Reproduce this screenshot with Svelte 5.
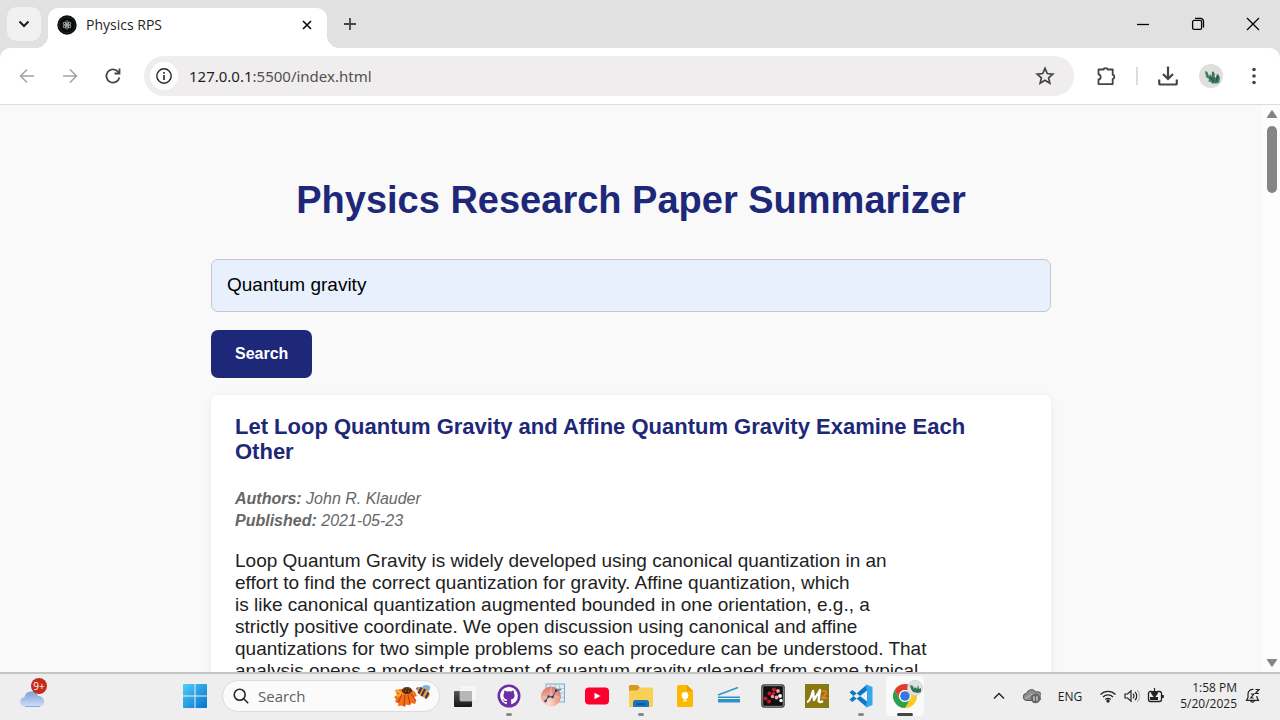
<script>
  let query = $state('Quantum gravity');

  const paper = {
    title: 'Let Loop Quantum Gravity and Affine Quantum Gravity Examine Each Other',
    authors: 'John R. Klauder',
    published: '2021-05-23',
    lines: [
      'Loop Quantum Gravity is widely developed using canonical quantization in an',
      'effort to find the correct quantization for gravity. Affine quantization, which',
      'is like canonical quantization augmented bounded in one orientation, e.g., a',
      'strictly positive coordinate. We open discussion using canonical and affine',
      'quantizations for two simple problems so each procedure can be understood. That',
      'analysis opens a modest treatment of quantum gravity gleaned from some typical'
    ]
  };
</script>

<div class="window">
  <header class="tabstrip">
    <button class="tab-search" aria-label="Search tabs">
      <svg width="12" height="12" viewBox="0 0 12 12"><path d="M1.500 3.500l4.500 4.500 4.500-4.500" fill="none" stroke="#1f1f1f" stroke-width="2" /></svg>
    </button>
    <div class="tab">
      <svg width="20" height="20" viewBox="0 0 20 20">
        <circle cx="10" cy="10" r="9.7" fill="#090b0a" />
        <circle cx="10" cy="10" r="8" fill="none" stroke="#2c3a33" stroke-width=".6" />
        <g fill="none" stroke="#b8bcba" stroke-width=".7">
          <ellipse cx="10" cy="10" rx="1.7" ry="4.4" />
          <ellipse cx="10" cy="10" rx="1.7" ry="4.4" transform="rotate(60 10 10)" />
          <ellipse cx="10" cy="10" rx="1.7" ry="4.4" transform="rotate(120 10 10)" />
        </g>
        <circle cx="10" cy="10" r="1" fill="#ddd" />
      </svg>
      <span class="tab-title">Physics RPS</span>
      <button class="tab-close" aria-label="Close tab">
        <svg width="12" height="12" viewBox="0 0 12 12"><path d="M2 2l8 8M10 2l-8 8" stroke="#111" stroke-width="1.700" /></svg>
      </button>
    </div>
    <button class="new-tab" aria-label="New tab">
      <svg width="14" height="14" viewBox="0 0 14 14"><path d="M7 1v12M1 7h12" stroke="#444" stroke-width="1.8" /></svg>
    </button>
    <div class="controls">
      <button aria-label="Minimize"><svg width="14" height="14" viewBox="0 0 14 14"><path d="M1 7.5h12" stroke="#000" stroke-width="1.3" /></svg></button>
      <button aria-label="Restore">
        <svg width="14" height="14" viewBox="0 0 14 14" fill="none" stroke="#000" stroke-width="1.3"><rect x="1.6" y="3.4" width="9" height="9" rx="1.5" /><path d="M4 1.4h5.5a3 3 0 013 3v6" /></svg>
      </button>
      <button aria-label="Close"><svg width="14" height="14" viewBox="0 0 14 14"><path d="M1 1l12 12M13 1L1 13" stroke="#000" stroke-width="1.3" /></svg></button>
    </div>
  </header>

  <nav class="toolbar" aria-label="Browser">
    <button class="tool" aria-label="Back"><svg width="16" height="16" viewBox="0 0 16 16"><path d="M15 8H2M8 1.5L1.5 8 8 14.500" fill="none" stroke="#a3a3a3" stroke-width="1.6" /></svg></button>
    <button class="tool" aria-label="Forward"><svg width="16" height="16" viewBox="0 0 16 16"><path d="M1 8h13M8 1.500L14.500 8 8 14.500" fill="none" stroke="#a3a3a3" stroke-width="1.6" /></svg></button>
    <button class="tool" aria-label="Reload">
      <svg width="18" height="18" viewBox="0 0 18 18"><path d="M15.400 10.500A6.600 6.600 0 1 1 14 4.700l1.200 1.500" fill="none" stroke="#444" stroke-width="1.8" /><path d="M15.500 1.500V6.500H10.500" fill="none" stroke="#444" stroke-width="1.800" /></svg>
    </button>
    <div class="omnibox">
      <button class="site-info" aria-label="Site information">
        <svg width="18" height="18" viewBox="0 0 18 18"><circle cx="9" cy="9" r="7.200" fill="none" stroke="#262626" stroke-width="1.400" /><path d="M9 8v5M9 5v1.800" stroke="#262626" stroke-width="1.600" /></svg>
      </button>
      <a class="url" href="#results">127.0.0.1<span>:5500/index.html</span></a>
      <button class="star" aria-label="Bookmark this page">
        <svg width="20" height="20" viewBox="0 0 20 20"><path d="M10 2.400l2.250 5.100 5.550.55-4.200 3.700 1.250 5.450L10 14.300l-4.850 2.900 1.250-5.450-4.200-3.700 5.550-.55z" fill="none" stroke="#444" stroke-width="1.700" /></svg>
      </button>
    </div>
    <button class="tool extensions" aria-label="Extensions">
      <svg width="22" height="22" viewBox="0 0 22 22"><path d="M3.500 4.500h5.200a1.900 1.400 0 013.800 0h5.200v5.300a1.600 2 0 010 4v5.300H3.500v-4.600c2.900-.3 2.900-4.900 0-5.200z" fill="none" stroke="#444" stroke-width="1.800" stroke-linejoin="round" /></svg>
    </button>
    <span class="divider"></span>
    <button class="tool" aria-label="Downloads">
      <svg width="22" height="22" viewBox="0 0 22 22" fill="none" stroke="#444" stroke-width="2.200"><path d="M11 1.500v12.500M6 9l5 5 5-5M2.200 14.500v3.400c0 1 .6 1.600 1.600 1.600h14.400c1 0 1.600-.6 1.600-1.600v-3.400" /></svg>
    </button>
    <button class="tool" aria-label="Profile">
      <svg width="24" height="24" viewBox="0 0 24 24"><circle cx="12" cy="12" r="12" fill="#dedfde" /><path d="M6 7l2.500 1 1.500 4.500 1-2.500 1.500 2.500L13 7.500l2 .5-.5 5 2 1 1.500-4 1.500.5 1.500 3.500-.8 4.500-2.200 1H13l-1.500-2-2 .5.500-3-3-2-.5-3z" fill="#3f7d61" /><path d="M11 13l4 5M15 9v6M19 12l-2 5" stroke="#16452f" fill="none" /></svg>
    </button>
    <button class="tool" aria-label="Browser menu">
      <svg width="6" height="18" viewBox="0 0 6 18" fill="#444"><circle cx="3" cy="2.500" r="1.800" /><circle cx="3" cy="9" r="1.800" /><circle cx="3" cy="15.500" r="1.800" /></svg>
    </button>
  </nav>

  <div class="viewport">
    <main>
      <h1>Physics Research Paper Summarizer</h1>
      <form onsubmit={(e) => e.preventDefault()}>
        <input type="text" aria-label="Research topic" bind:value={query} />
        <button type="submit">Search</button>
      </form>
      <article id="results">
        <h2>{paper.title}</h2>
        <p class="meta"><strong>Authors:</strong> {paper.authors}<br /><strong>Published:</strong> {paper.published}</p>
        <p class="abstract">{paper.lines.join('\n')}</p>
      </article>
    </main>
    <div class="scrollbar" aria-hidden="true">
      <svg width="12" height="10" viewBox="0 0 12 10"><path d="M6 1.500L10.800 8.500H1.200z" fill="#858585" stroke="#858585" stroke-linejoin="round" /></svg>
      <span class="thumb"></span>
      <svg width="12" height="10" viewBox="0 0 12 10"><path d="M6 8.500L10.800 1.500H1.200z" fill="#858585" stroke="#858585" stroke-linejoin="round" /></svg>
    </div>
  </div>

  <footer class="taskbar">
    <button class="app" aria-label="Weather">
      <svg width="28" height="28" viewBox="0 0 28 28">
        <defs><linearGradient id="cloud" x1="0" y1="0" x2="0" y2="1"><stop offset="0" stop-color="#7f9fd8" /><stop offset="1" stop-color="#cfe0fa" /></linearGradient></defs>
        <path d="M6 25a5 5 0 01-.6-9.900A7.300 7.300 0 0119.200 14 5.600 5.600 0 0121 25z" fill="url(#cloud)" />
        <path d="M6 24.500h15" stroke="#88a9dd" />
      </svg>
      <span class="count">9+</span>
    </button>

    <button class="app start" aria-label="Start">
      <svg width="24" height="24" viewBox="0 0 24 24">
        <defs><linearGradient id="win" x1="0" y1="0" x2="1" y2="1"><stop offset="0" stop-color="#4fcdf8" /><stop offset="1" stop-color="#0672cd" /></linearGradient></defs>
        <path d="M0 1a1 1 0 011-1h10.500v11.500H0zM12.500 0H23a1 1 0 011 1v10.500H12.500zM0 12.500h11.500V24H1a1 1 0 01-1-1zM12.500 12.500H24V23a1 1 0 01-1 1H12.500z" fill="url(#win)" />
      </svg>
    </button>

    <label class="search">
      <svg width="16" height="16" viewBox="0 0 16 16" fill="none" stroke="#262626" stroke-width="1.600"><circle cx="6.700" cy="6.700" r="5.500" /><path d="M10.800 10.800l4.400 4.400" /></svg>
      <input type="text" placeholder="Search" aria-label="Search Windows" />
      <svg width="38" height="24" viewBox="0 0 38 24">
        <path d="M2 6l7-1h9l4 3 2 4-3 1 2 5-1 2-4-1-1 2.500-4-1L12 23l-3-1.500L5 22l.5-3-3.500-1 1-3-2-2 3-2z" fill="#f0711a" />
        <path d="M2.500 6.200l6 3M4 12l6-2" stroke="#ffb02e" stroke-width="2" />
        <path d="M9 10l-4 9M12 11l-1 11M15 11l2 9M18 10l5 7" stroke="#c53e10" stroke-width="1.200" fill="none" />
        <ellipse cx="14" cy="6.500" rx="5" ry="3.500" fill="#54290d" />
        <path d="M10 5h1M13 4h1M16 5h1M12 7h1M15 7.500h1" stroke="#c1822b" stroke-width="1.200" />
        <path d="M29 4c0-3 4-4 8-2 1 3-1 6-5 6z" fill="#79b7e2" />
        <path d="M23 5c0-2 3-2.500 6 0l-3 3z" fill="#777387" />
        <ellipse cx="30.500" cy="8.500" rx="6.800" ry="4.300" transform="rotate(35 30.500 8.500)" fill="#e0a03b" />
        <path d="M28.500 3.500l-3 6M32 5l-3.500 7M35.500 8.500l-3 6" stroke="#493252" stroke-width="2.200" />
      </svg>
    </label>

    <div class="apps">
      <button class="app" aria-label="Task view">
        <svg width="26" height="24" viewBox="0 0 26 24">
          <defs><linearGradient id="tv" x1="0" y1="0" x2="0" y2="1"><stop offset="0" stop-color="#555" /><stop offset="1" stop-color="#151515" /></linearGradient></defs>
          <rect x="2" y="7" width="18" height="16" rx="1" fill="url(#tv)" /><rect x="8" y="1" width="17" height="16" rx="1" fill="#f6f6f6" stroke="#e4e4e4" stroke-width=".6" /><path d="M8 7h12v10H8z" fill="#b7b7b7" />
        </svg>
      </button>
      <button class="app running" aria-label="GitHub Desktop">
        <svg width="24" height="24" viewBox="0 0 24 24">
          <circle cx="12" cy="12" r="11.500" fill="#6c2fa4" />
          <path transform="translate(3.200 3) scale(1.100)" fill="#fff" d="M8 0C3.580 0 0 3.580 0 8c0 3.540 2.290 6.530 5.470 7.590.4.070.55-.17.55-.38 0-.19-.01-.82-.01-1.490-2.010.37-2.530-.49-2.690-.94-.09-.23-.48-.94-.82-1.130-.28-.15-.68-.52-.01-.53.63-.01 1.080.58 1.230.82.72 1.210 1.870.87 2.330.66.07-.52.28-.87.51-1.070-1.780-.2-3.640-.89-3.640-3.950 0-.87.31-1.590.82-2.150-.08-.2-.36-1.020.08-2.120 0 0 .67-.21 2.200.82a7.400 7.400 0 014 0c1.530-1.040 2.200-.82 2.200-.82.44 1.100.16 1.920.08 2.120.51.56.82 1.270.82 2.150 0 3.070-1.870 3.750-3.650 3.950.29.25.54.73.54 1.480 0 1.070-.01 1.930-.01 2.200 0 .21.15.46.55.38A8.010 8.010 0 0016 8c0-4.420-3.580-8-8-8z" />
        </svg>
      </button>
      <button class="app" aria-label="Graphing">
        <svg width="26" height="26" viewBox="0 0 26 26">
          <defs><radialGradient id="ball" cx=".4" cy=".85" r=".8"><stop offset="0" stop-color="#ffe3d4" /><stop offset=".5" stop-color="#f3a48c" /><stop offset="1" stop-color="#dc7462" /></radialGradient></defs>
          <rect x="6" y="1" width="18.500" height="18" fill="#dcecf5" stroke="#85aac6" /><path d="M6 5.500h18M6 10h18M6 14.500h18M10.500 1v18M15 1v18M19.500 1v18" stroke="#9dc0d7" stroke-width=".7" />
          <circle cx="11" cy="13.500" r="10" fill="url(#ball)" opacity=".92" /><path d="M2 14h18M11 4v19" stroke="#f8cfc1" stroke-width=".7" />
          <path d="M5.500 18l3-4.500 4 .5 3.500-6.500 5-1" fill="none" stroke="#314e76" /><path d="M5.500 18h.1M8.500 13.500h.1M12.500 14h.1M16 7.500h.1" stroke="#243f67" stroke-width="2.400" stroke-linecap="round" />
        </svg>
      </button>
      <button class="app" aria-label="YouTube">
        <svg width="24" height="24" viewBox="0 0 24 24"><rect y="3.500" width="24" height="17" rx="4" fill="#fc0030" /><path d="M9.500 8.800l6 3.200-6 3.200z" fill="#fff" /></svg>
      </button>
      <button class="app running" aria-label="File Explorer">
        <svg width="26" height="24" viewBox="0 0 26 24"><path d="M1 2.500A1.500 1.500 0 012.500 1h7L12 3.500 9 7H1z" fill="#d79a1f" /><path d="M1 6.500h8l3-3h11.500A1.500 1.500 0 0125 5v18H1z" fill="#f8d057" /><path d="M5 23v-4.500a2.500 2.500 0 012.500-2.500h11a2.500 2.500 0 012.500 2.500V23z" fill="#1875be" /><path d="M9 20h8" stroke="#0a4782" stroke-width="1.500" stroke-linecap="round" /></svg>
      </button>
      <button class="app" aria-label="Google Keep">
        <svg width="18" height="24" viewBox="0 0 18 24"><path d="M2.500 1H11l6 6v14.500a1.500 1.500 0 01-1.500 1.500h-13A1.500 1.500 0 011 21.500v-19A1.500 1.500 0 012.500 1z" fill="#fbb900" /><path d="M11 1l6 6h-6z" fill="#f29a00" /><circle cx="9" cy="11.500" r="3.400" fill="#fff" /><path d="M7.300 14h3.400v1.500H7.300zM7.300 16.300h3.400v1.200H7.300z" fill="#fff" /></svg>
      </button>
      <button class="app" aria-label="Scanner">
        <svg width="24" height="24" viewBox="0 0 24 24"><path d="M1 11L21 3.500" stroke="#3595c1" stroke-width="1.600" /><path d="M1 12.500h22v1.500H1zM1 15h22v3.500H1z" fill="#2c92c6" /></svg>
      </button>
      <button class="app" aria-label="Molecule viewer">
        <svg width="24" height="24" viewBox="0 0 24 24"><rect x=".7" y=".7" width="22.600" height="22.600" rx="2" fill="#111" stroke="#555" /><rect x="1.700" y="1.700" width="20.600" height="20.600" rx="1.500" fill="none" stroke="#ddd" stroke-width=".6" /><g fill="#c8192a"><circle cx="8.500" cy="9.500" r="2" /><circle cx="13" cy="5.500" r="2" /><circle cx="4.500" cy="14.500" r="2" /><circle cx="8" cy="17.500" r="2" /><circle cx="12.500" cy="9.500" r="1.800" /></g><g fill="#f0a0a8"><circle cx="17" cy="7" r="1.900" /><circle cx="15.500" cy="13.500" r="1.900" /><circle cx="11.500" cy="12.500" r="1.700" /></g><circle cx="19" cy="12" r="1.900" fill="#fff" /><circle cx="20" cy="16.500" r="1.700" fill="#fff" /></svg>
      </button>
      <button class="app" aria-label="M2">
        <svg width="24" height="24" viewBox="0 0 24 24"><path d="M0 0h24v24H0z" fill="#877811" /><path d="M2 18c2 0 4-4 6-11l1 9 6-10-1.500 11c1 1.500 3 1 4.500 0" fill="none" stroke="#fff" stroke-width="2.400" stroke-linejoin="round" /><path d="M17 8c1-1.500 4-1.500 4 0.500 0 1.800-2 3.500-3.500 5.500H22" fill="none" stroke="#f47a22" stroke-width="2" /></svg>
      </button>
      <button class="app running" aria-label="Visual Studio Code">
        <svg width="24" height="24" viewBox="0 0 24 24"><path d="M0.500 8.500L3.300 6 18 17.500v6zM.5 15.500l2.800 2.500L18 6.500V.5z" fill="#0b78c4" /><path d="M17.500.4L23.500 3v18l-6 2.600-1-1L18 18V6l-1.500-4.600z" fill="#35a7ee" /></svg>
      </button>
      <button class="app active" aria-label="Google Chrome">
        <svg width="24" height="24" viewBox="0 0 24 24"><path d="M12 12V6h10.400A12 12 0 0112 24z" fill="#fcc91e" /><path d="M1.600 6A12 12 0 0122.400 6H12a6 6 0 00-5.200 9z" fill="#e33b2e" /><path d="M1.600 6A12 12 0 0012 24l5.200-9a6 6 0 01-10.400 0z" fill="#2da04b" /><circle cx="12" cy="12" r="6" fill="#fff" /><circle cx="12" cy="12" r="4.800" fill="#3577e5" /></svg>
        <svg class="profile" width="16" height="16" viewBox="0 0 16 16"><circle cx="8" cy="8" r="7.600" fill="#dfe2df" stroke="#c6c8c6" stroke-width=".6" /><path d="M3 5l3 1 1 3 1-2 2 2 1-4 1 4 2-1v4l-3 1-5-1-2-3z" fill="#2f7153" /></svg>
      </button>
    </div>

    <div class="tray">
      <button class="chevron" aria-label="Show hidden icons"><svg width="12" height="12" viewBox="0 0 12 12"><path d="M1 8.500l5-5 5 5" fill="none" stroke="#222" stroke-width="1.400" /></svg></button>
      <button class="onedrive" aria-label="OneDrive paused">
        <svg width="18" height="16" viewBox="0 0 18 16"><path d="M4 12.500a3.600 3.600 0 01-.3-7.200A5 5 0 0112.800 4 4 4 0 0116 12.500z" fill="#8e8e8e" stroke="#555" /><path d="M2 11l7-5 6 5" stroke="#bbb" fill="none" /><circle cx="12.500" cy="10.500" r="4.800" fill="#666" /><path d="M11 8.300v4.400M14 8.300v4.400" stroke="#ddd" stroke-width="1.200" /></svg>
      </button>
      <button class="lang">ENG</button>
      <button class="quick" aria-label="Network, volume and battery">
        <svg width="18" height="16" viewBox="0 0 18 16" fill="none" stroke="#222" stroke-width="1.300"><path d="M1.500 6.500a10.500 10.500 0 0115 0M4 9a7 7 0 0110 0M6.300 11.500a3.800 3.800 0 015.400 0" /><circle cx="9" cy="13" r="1" fill="#222" /></svg>
        <svg width="18" height="16" viewBox="0 0 18 16" fill="none" stroke="#222" stroke-width="1.200"><path d="M2 6h2.500L8 2.800v10.400L4.500 10H2z" /><path d="M10 5.800a3 3 0 010 4.400M12 3.800a6 6 0 010 8.400" /><path d="M14.200 2a8.500 8.500 0 010 12" stroke="#b5b5b5" /></svg>
        <svg width="18" height="16" viewBox="0 0 18 16"><path d="M5 3.500H3.500A2 2 0 001.500 5.500v6a2 2 0 002 2h9a2 2 0 002-2v-6a2 2 0 00-2-2H10" fill="none" stroke="#222" stroke-width="1.300" /><path d="M3 9h8v3H3zM15 7h1.800v3H15z" fill="#222" /><path d="M7.500 0v4M4.800 3.500h5.400v2L7.500 9 4.800 5.500z" stroke="#222" fill="#222" stroke-width="1.200" /></svg>
      </button>
      <button class="clock"><span>1:58 PM</span><span>5/20/2025</span></button>
      <button class="bell" aria-label="Notifications snoozed">
        <svg width="16" height="16" viewBox="0 0 16 16" fill="none" stroke="#222" stroke-width="1.200"><path d="M8.500 1.500A4.600 4.600 0 003 6v3.500L1.500 12.400h12L12 9.500V8" /><path d="M5.600 12.800a2 2 0 003.800 0M5.800 6h3l-3 4h3M10.500 1.500h3.500l-3.500 4h3.500" /></svg>
      </button>
    </div>
  </footer>
</div>

<style>
  :global(body) { margin: 0; }
  * { box-sizing: border-box; }
  .window {
    display: flex;
    flex-direction: column;
    height: 100vh;
    overflow: hidden;
    background: #e1e1e1;
    font-family: "Open Sans", "Noto Sans", sans-serif;
    font-size: 14px;
    color: #1f1f1f;
  }
  svg { display: block; flex: none; }
  button { font: inherit; color: inherit; border: 0; padding: 0; background: none; }

  .tabstrip { display: flex; align-items: flex-end; height: 48px; flex: none; padding-left: 7px; }
  .tab-search {
    display: grid; place-items: center; width: 34px; height: 34px;
    margin: 0 7px 7px 0; border-radius: 10px; background: #f1f1f1;
  }
  .tab {
    position: relative; display: flex; align-items: center; gap: 9px;
    width: 279px; height: 40px; padding: 0 10px 7px 9px;
    border-radius: 10px 10px 0 0; background: #fff;
  }
  .tab::before, .tab::after { content: ""; position: absolute; bottom: 0; width: 12px; height: 12px; }
  .tab::before { right: 100%; background: radial-gradient(circle at 0 0, transparent 12px, #fff 12px); }
  .tab::after { left: 100%; background: radial-gradient(circle at 100% 0, transparent 12px, #fff 12px); }
  .tab-title { flex: 1; line-height: 20px; }
  .tab-close, .new-tab { display: grid; place-items: center; width: 20px; height: 20px; }
  .new-tab { margin: 0 0 14px 13px; }
  .controls { display: flex; align-self: stretch; margin-left: auto; }
  .controls button { display: grid; place-items: center; width: 55px; }

  .toolbar {
    display: flex; align-items: center; height: 57px; flex: none;
    padding: 0 5px 0 5px; border-bottom: 1px solid #dcdcdc;
    border-radius: 10px 10px 0 0; background: #fff;
  }
  .tool { display: grid; place-items: center; width: 43px; height: 40px; }
  .omnibox {
    display: flex; align-items: center; flex: 1; height: 40px;
    margin: 0 10px; padding: 0 19px 0 6px; border-radius: 20px; background: #efedee;
  }
  .site-info { display: grid; place-items: center; width: 28px; height: 28px; border-radius: 50%; background: #fff; }
  .url {
    flex: 1; margin-left: 11px; font-family: "Noto Sans", "Open Sans", sans-serif;
    font-size: 15px; line-height: 20px; color: #1f1f1f; text-decoration: none;
  }
  .url span { color: #505050; }
  .divider { width: 2px; height: 18px; margin: 0 8px 0 9px; background: #dcdcdc; }

  .viewport { display: flex; flex: 1; min-height: 0; background: #f9f9f9; }
  main {
    flex: 1; min-width: 0; overflow-y: auto; scrollbar-width: none; padding: 72px 32px 0;
    font-family: "Liberation Sans", Arial, sans-serif; color: #222;
  }
  h1, form, article { max-width: 840px; margin: 0 auto; }
  h1 { font-size: 38px; line-height: 46px; text-align: center; color: #1e2879; }
  form { display: flex; flex-direction: column; align-items: flex-start; gap: 18px; margin-top: 36px; }
  form input {
    width: 100%; height: 53px; padding: 0 15px 2px; border: 1px solid #c5c7cc; border-radius: 7px;
    background: #e8f0fe; font: 19px "Liberation Sans", Arial, sans-serif; color: #000;
  }
  form button {
    height: 48px; padding: 0 24px; border-radius: 7px; background: #1e2879;
    font-size: 16px; font-weight: bold; color: #fff;
  }
  article {
    margin-top: 17px; padding: 19px 24px 24px; border-radius: 7px;
    background: #fff; box-shadow: 0 2px 10px rgba(0, 0, 0, 0.06);
  }
  h2 { margin: 0 0 24px; font-size: 22px; line-height: 25px; color: #1e2879; }
  p { margin: 0; line-height: 22px; }
  .meta { margin-bottom: 18px; font-size: 16px; font-style: italic; color: #666; }
  .abstract { font-size: 19px; white-space: pre-line; }

  .scrollbar {
    display: flex; flex-direction: column; align-items: center; flex: none;
    width: 18px; padding: 4px 0 4px 2px; background: #fcfcfc;
  }
  .thumb { width: 10px; height: 67px; margin: 7px 0 auto; border-radius: 5px; background: #858585; }

  .taskbar {
    display: flex; align-items: center; height: 48px; flex: none;
    padding: 0 19px 2px 11px; border-top: 2px solid #c4c4c4; background: #eee;
  }
  .app { position: relative; display: grid; place-items: center; width: 44px; height: 40px; border-radius: 4px; }
  .count {
    position: absolute; top: 2px; right: 8px; width: 16px; height: 16px;
    border-radius: 8px; background: #c42b1c; color: #fff; font-size: 10px; line-height: 16px;
  }
  .start { margin: 0 5px 0 118px; }
  .search {
    display: flex; align-items: center; width: 218px; height: 32px; padding: 0 8px 0 10px;
    border: 1px solid #dcdcdc; border-radius: 16px; background: #fbfbfb;
  }
  .search input {
    flex: 1; min-width: 0; margin-left: 9px; padding: 0; border: 0; outline: 0;
    background: none; font: inherit; font-size: 15px; color: #222;
  }
  .search input::placeholder { color: #606060; opacity: 1; }
  .apps { display: flex; margin-left: 3px; }
  .running::after, .active::after {
    content: ""; position: absolute; bottom: 0; left: 50%; width: 6px; height: 3px;
    margin-left: -3px; border-radius: 2px; background: #888;
  }
  .active { width: 38px; margin-left: 3px; background: #fafafa; }
  .active::after { width: 16px; margin-left: -8px; background: #444; }
  .profile { position: absolute; top: 4px; right: 1px; }
  .tray { display: flex; align-items: center; margin-left: auto; }
  .chevron { margin-right: 18px; }
  .onedrive { margin-right: 17px; }
  .lang { font-size: 12px; margin-right: 17px; }
  .quick { display: flex; gap: 6px; margin-right: 15px; }
  .clock { display: flex; flex-direction: column; align-items: flex-end; font-size: 12px; line-height: 16px; margin-right: 8px; }
</style>
